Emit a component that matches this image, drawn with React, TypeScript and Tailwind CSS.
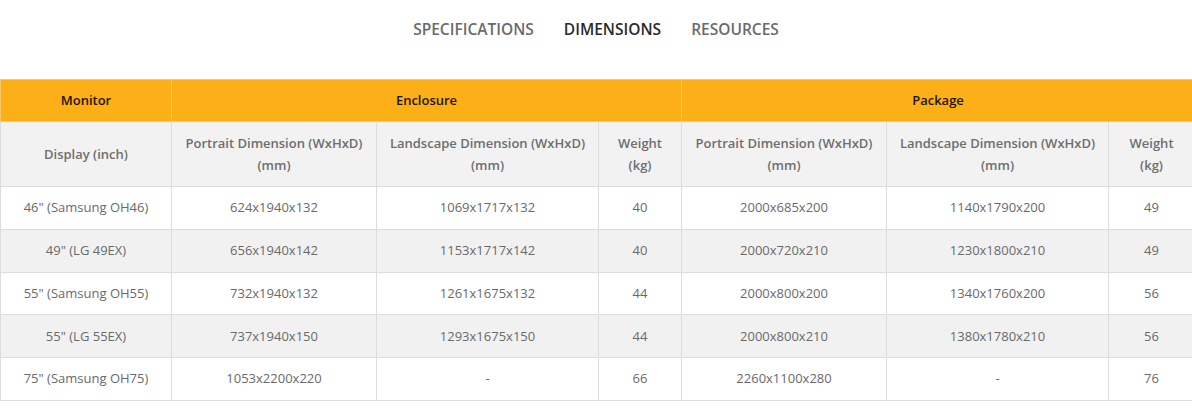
import React from 'react';

const ROWS = [
  ['46" (Samsung OH46)', '624x1940x132', '1069x1717x132', '40', '2000x685x200', '1140x1790x200', '49'],
  ['49" (LG 49EX)', '656x1940x142', '1153x1717x142', '40', '2000x720x210', '1230x1800x210', '49'],
  ['55" (Samsung OH55)', '732x1940x132', '1261x1675x132', '44', '2000x800x200', '1340x1760x200', '56'],
  ['55" (LG 55EX)', '737x1940x150', '1293x1675x150', '44', '2000x800x210', '1380x1780x210', '56'],
  ['75" (Samsung OH75)', '1053x2200x220', '-', '66', '2260x1100x280', '-', '76'],
];

const SUB = [
  'Display (inch)',
  'Portrait Dimension (WxHxD) (mm)',
  'Landscape Dimension (WxHxD) (mm)',
  'Weight (kg)',
  'Portrait Dimension (WxHxD) (mm)',
  'Landscape Dimension (WxHxD) (mm)',
  'Weight (kg)',
];

export default function App() {
  return (
    <div className="w-[1192px] h-[412px] bg-white overflow-hidden" style={{ fontFamily: '"Open Sans", "Noto Sans", sans-serif' }}>
      {/* tabs */}
      <div className="flex justify-center gap-[30px] h-[79px] pt-[18px] text-[15.5px] font-semibold">
        <span className="text-[#6b6b6b]">SPECIFICATIONS</span>
        <span className="text-[#2b2b2b]">DIMENSIONS</span>
        <span className="text-[#6b6b6b]">RESOURCES</span>
      </div>

      <table className="table-fixed border-collapse w-[1194px] text-[13px] text-center">
        <colgroup>
          <col className="w-[171px]" />
          <col className="w-[205px]" />
          <col className="w-[222px]" />
          <col className="w-[83px]" />
          <col className="w-[205px]" />
          <col className="w-[222px]" />
          <col className="w-[86px]" />
        </colgroup>
        <thead>
          <tr className="h-[42px] bg-[#fdaf17] text-[#1c1400]">
            <th className="border border-[#f9c766] font-semibold">Monitor</th>
            <th colSpan={3} className="border border-[#f9c766] font-semibold">Enclosure</th>
            <th colSpan={3} className="border border-[#f9c766] font-semibold">Package</th>
          </tr>
          <tr className="h-[65px] bg-[#f2f2f2] text-[#6e6e6e]">
            {SUB.map((s, i) => (
              <th key={i} className="border border-[#dddddd] font-semibold leading-[22px] px-2">
                {s}
              </th>
            ))}
          </tr>
        </thead>
        <tbody>
          {ROWS.map((r, i) => (
            <tr key={i} className={`h-[42.8px] text-[#6a6a6a] ${i % 2 === 1 ? 'bg-[#f1f1f1]' : 'bg-white'}`}>
              {r.map((c, j) => (
                <td key={j} className="border border-[#dddddd]">
                  {c}
                </td>
              ))}
            </tr>
          ))}
        </tbody>
      </table>
    </div>
  );
}
